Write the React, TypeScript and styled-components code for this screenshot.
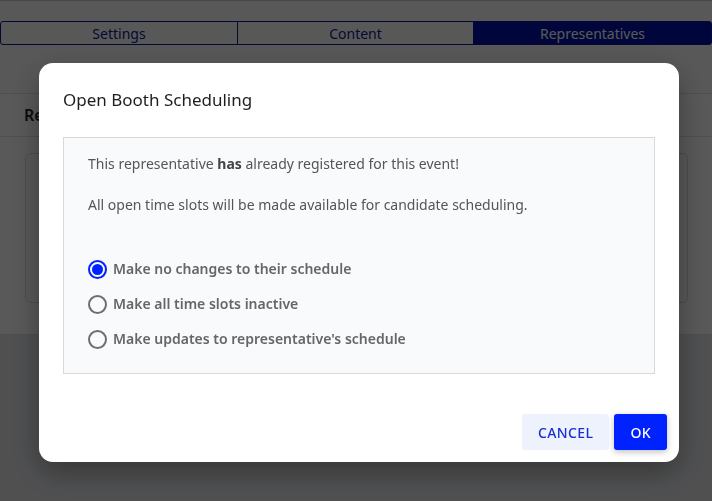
import React, { useState } from "react";
import styled, { createGlobalStyle } from "styled-components";

const Global = createGlobalStyle`
  html, body {
    margin: 0;
    padding: 0;
    background: #eceef1;
    font-family: "Noto Sans", "Open Sans", sans-serif;
  }
  * { box-sizing: border-box; }
`;

const Page = styled.div`
  height: 501px;
  display: flex;
  flex-direction: column;
  border-top: 1px solid #c8cacd;
  background: #fdfdfe;
`;

const TabBar = styled.div`
  margin-top: 20px;
  display: grid;
  grid-template-columns: 236px 236px 1fr;
  border: 1px solid #0a1a8c;
  border-radius: 3px;
  height: 24px;
`;

const Tab = styled.div<{ $active?: boolean }>`
  display: flex;
  align-items: center;
  justify-content: center;
  font-size: 14px;
  color: ${(p) => (p.$active ? "#ffffff" : "#0b1b8e")};
  background: ${(p) => (p.$active ? "#0011a8" : "transparent")};
  & + & {
    border-left: 1px solid #0a1a8c;
  }
`;

const Panel = styled.section`
  margin-top: 48px;
  background: #ffffff;
  border-top: 1px solid #e0e2e5;
  border-bottom: 1px solid #e0e2e5;
  height: 242px;
  display: flex;
  flex-direction: column;
`;

const PanelHead = styled.h2`
  margin: 0;
  padding: 0 24px;
  height: 43px;
  display: flex;
  align-items: center;
  font-size: 16px;
  font-weight: 600;
  color: #222;
  border-bottom: 1px solid #e0e2e5;
`;

const Card = styled.div`
  margin: 16px 24px 0 25px;
  height: 150px;
  border: 1px solid #d8dadd;
  border-radius: 6px;
`;

const Bottom = styled.div`
  flex: 1;
  background: #e4e6e9;
`;

const Overlay = styled.div`
  position: fixed;
  inset: 0;
  background: rgba(0, 0, 0, 0.65);
  display: flex;
  align-items: flex-start;
  justify-content: center;
  padding: 63px 0 0 6px;
`;

const Dialog = styled.div`
  width: 640px;
  height: 399px;
  background: #ffffff;
  border-radius: 14px;
  box-shadow: 0 10px 30px rgba(0, 0, 0, 0.35);
  padding: 24px 12px 12px 24px;
  display: flex;
  flex-direction: column;
`;

const Title = styled.h1`
  margin: 0;
  font-size: 17px;
  font-weight: 400;
  color: #1f1f1f;
  line-height: 26px;
`;

const Body = styled.div`
  margin: 24px 12px 0 0;
  height: 237px;
  background: #f9fafc;
  border: 1px solid #d9d9d9;
  padding: 16px 24px 0;
  display: flex;
  flex-direction: column;
`;

const Para = styled.p`
  margin: 0 0 21px;
  font-size: 14px;
  line-height: 20px;
  color: #555;
  b { font-weight: 700; color: #444; }
`;

const Options = styled.div`
  margin-top: 23px;
  display: flex;
  flex-direction: column;
  gap: 15px;
`;

const Option = styled.label`
  display: flex;
  align-items: center;
  gap: 6px;
  font-size: 14px;
  font-weight: 600;
  color: #666;
  line-height: 20px;
  cursor: pointer;
`;

const Radio = styled.span<{ $checked?: boolean }>`
  width: 19px;
  height: 19px;
  border-radius: 50%;
  border: 2px solid ${(p) => (p.$checked ? "#0022ff" : "#6e6e6e")};
  display: flex;
  align-items: center;
  justify-content: center;
  &::after {
    content: "";
    width: 11px;
    height: 11px;
    border-radius: 50%;
    background: ${(p) => (p.$checked ? "#0022ff" : "transparent")};
  }
`;

const Actions = styled.div`
  margin-top: auto;
  display: flex;
  justify-content: flex-end;
  gap: 5px;
`;

const Button = styled.button<{ $primary?: boolean }>`
  height: 36px;
  padding: 0 16px;
  border: none;
  border-radius: 3px;
  font-family: "Noto Sans", "Open Sans", sans-serif;
  font-size: 14px;
  font-weight: 500;
  letter-spacing: 0.4px;
  color: ${(p) => (p.$primary ? "#ffffff" : "#1530d8")};
  background: ${(p) => (p.$primary ? "#0022ff" : "#eef2fd")};
  box-shadow: ${(p) => (p.$primary ? "0 2px 6px rgba(0,0,0,0.25)" : "none")};
  cursor: pointer;
`;

const options = [
  "Make no changes to their schedule",
  "Make all time slots inactive",
  "Make updates to representative's schedule",
];

export default function App() {
  const [choice, setChoice] = useState(0);
  return (
    <>
      <Global />
      <Page>
        <TabBar>
          <Tab>Settings</Tab>
          <Tab>Content</Tab>
          <Tab $active>Representatives</Tab>
        </TabBar>
        <Panel>
          <PanelHead>Representatives</PanelHead>
          <Card />
        </Panel>
        <Bottom />
      </Page>
      <Overlay>
        <Dialog>
          <Title>Open Booth Scheduling</Title>
          <Body>
            <Para>
              This representative <b>has</b> already registered for this event!
            </Para>
            <Para>All open time slots will be made available for candidate scheduling.</Para>
            <Options>
              {options.map((o, i) => (
                <Option key={o} onClick={() => setChoice(i)}>
                  <Radio $checked={choice === i} />
                  {o}
                </Option>
              ))}
            </Options>
          </Body>
          <Actions>
            <Button>CANCEL</Button>
            <Button $primary>OK</Button>
          </Actions>
        </Dialog>
      </Overlay>
    </>
  );
}
